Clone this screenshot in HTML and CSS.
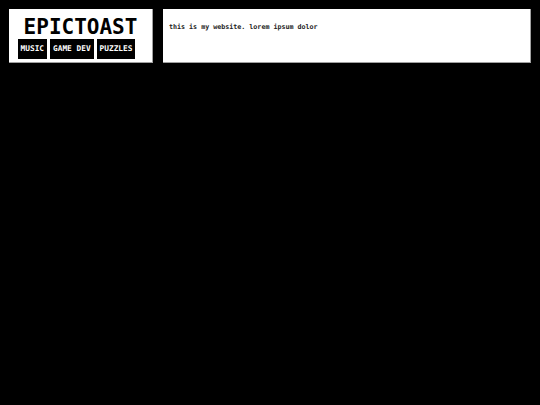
FILE: index.html
```html
<!DOCTYPE html>
<html>
<head>
<meta charset="utf-8">
<title>epictoast</title>
<link rel="stylesheet" href="styles.css">
</head>
<body>
<div class="page">
  <header class="header">
    <h1 class="title">EPICTOAST</h1>
    <nav class="nav">
      <a class="nav-btn" href="#">MUSIC</a>
      <a class="nav-btn" href="#">GAME DEV</a>
      <a class="nav-btn" href="#">PUZZLES</a>
    </nav>
  </header>
  <main class="content">
    <p class="text">this is my website. lorem ipsum dolor</p>
  </main>
</div>
</body>
</html>
```
FILE: styles.css
```css
html, body {
  margin: 0;
  padding: 0;
  background: #000;
  height: 100%;
}
body {
  font-family: "DejaVu Sans Mono", "Liberation Mono", monospace;
  font-weight: bold;
}
.page {
  display: flex;
  align-items: flex-start;
  gap: 10px;
  padding: 9px;
}
.header {
  box-sizing: border-box;
  width: 144px;
  height: 54px;
  background: #fff;
  border-right: 1px solid #a0a0a0;
  border-bottom: 1px solid #a0a0a0;
  display: flex;
  flex-direction: column;
  align-items: center;
}
.title {
  margin: 6px 0 0 0;
  font-size: 21px;
  line-height: 24px;
  color: #000;
  letter-spacing: 0;
}
.nav {
  display: flex;
  gap: 3px;
  margin-right: 8px;
}
.nav-btn {
  display: block;
  background: #000;
  color: #fff;
  text-decoration: none;
  font-size: 7.8px;
  line-height: 20px;
  height: 20px;
  padding: 0 3px;
}
.content {
  box-sizing: border-box;
  flex: 1;
  height: 54px;
  background: #fff;
  border-right: 1px solid #a0a0a0;
  border-bottom: 1px solid #a0a0a0;
  padding: 14px 6px;
}
.text {
  margin: 0;
  font-size: 6.68px;
  line-height: 8px;
  font-weight: bold;
  color: #222;
}
```
